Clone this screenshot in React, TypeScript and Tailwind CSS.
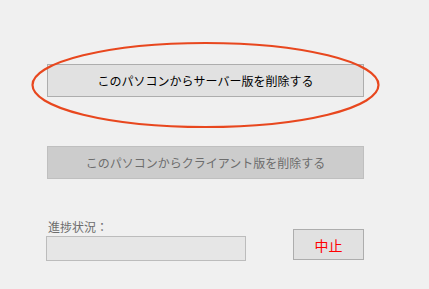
import React from "react";

export default function App() {
  const font = { fontFamily: '"Noto Sans CJK JP", "Noto Sans", sans-serif' };
  return (
    <div className="relative w-[429px] h-[289px] bg-[#f0f0f0] overflow-hidden" style={font}>
      <div className="flex flex-col pl-[46px] pt-[64px]">
        <button className="ml-px w-[317px] h-[33px] bg-[#e1e1e1] border border-[#adadad] text-[12px] leading-none text-[#000] flex items-center justify-center">
          このパソコンからサーバー版を削除する
        </button>
        <button
          disabled
          className="ml-px mt-[49px] w-[317px] h-[33px] bg-[#cccccc] border border-[#bfbfbf] text-[12px] leading-none text-[#6d6d6d] flex items-center justify-center"
        >
          このパソコンからクライアント版を削除する
        </button>
        <div className="flex mt-[41px]">
          <div className="flex flex-col w-[200px]">
            <span className="text-[12px] leading-[14px] text-[#6d6d6d] pl-[2px]">進捗状況：</span>
            <div className="mt-[2px] h-[25px] bg-[#e6e6e6] border border-[#bcbcbc]" />
          </div>
          <button className="ml-[47px] mt-[9px] w-[71px] h-[31px] bg-[#e1e1e1] border border-[#adadad] text-[14px] leading-none text-[#ff0000] flex items-center justify-center">
            中止
          </button>
        </div>
      </div>
      <svg className="absolute left-0 top-0 pointer-events-none" width="429" height="289">
        <ellipse cx="205.5" cy="85" rx="173" ry="42" fill="none" stroke="#e8471e" strokeWidth="2.2" />
      </svg>
    </div>
  );
}
